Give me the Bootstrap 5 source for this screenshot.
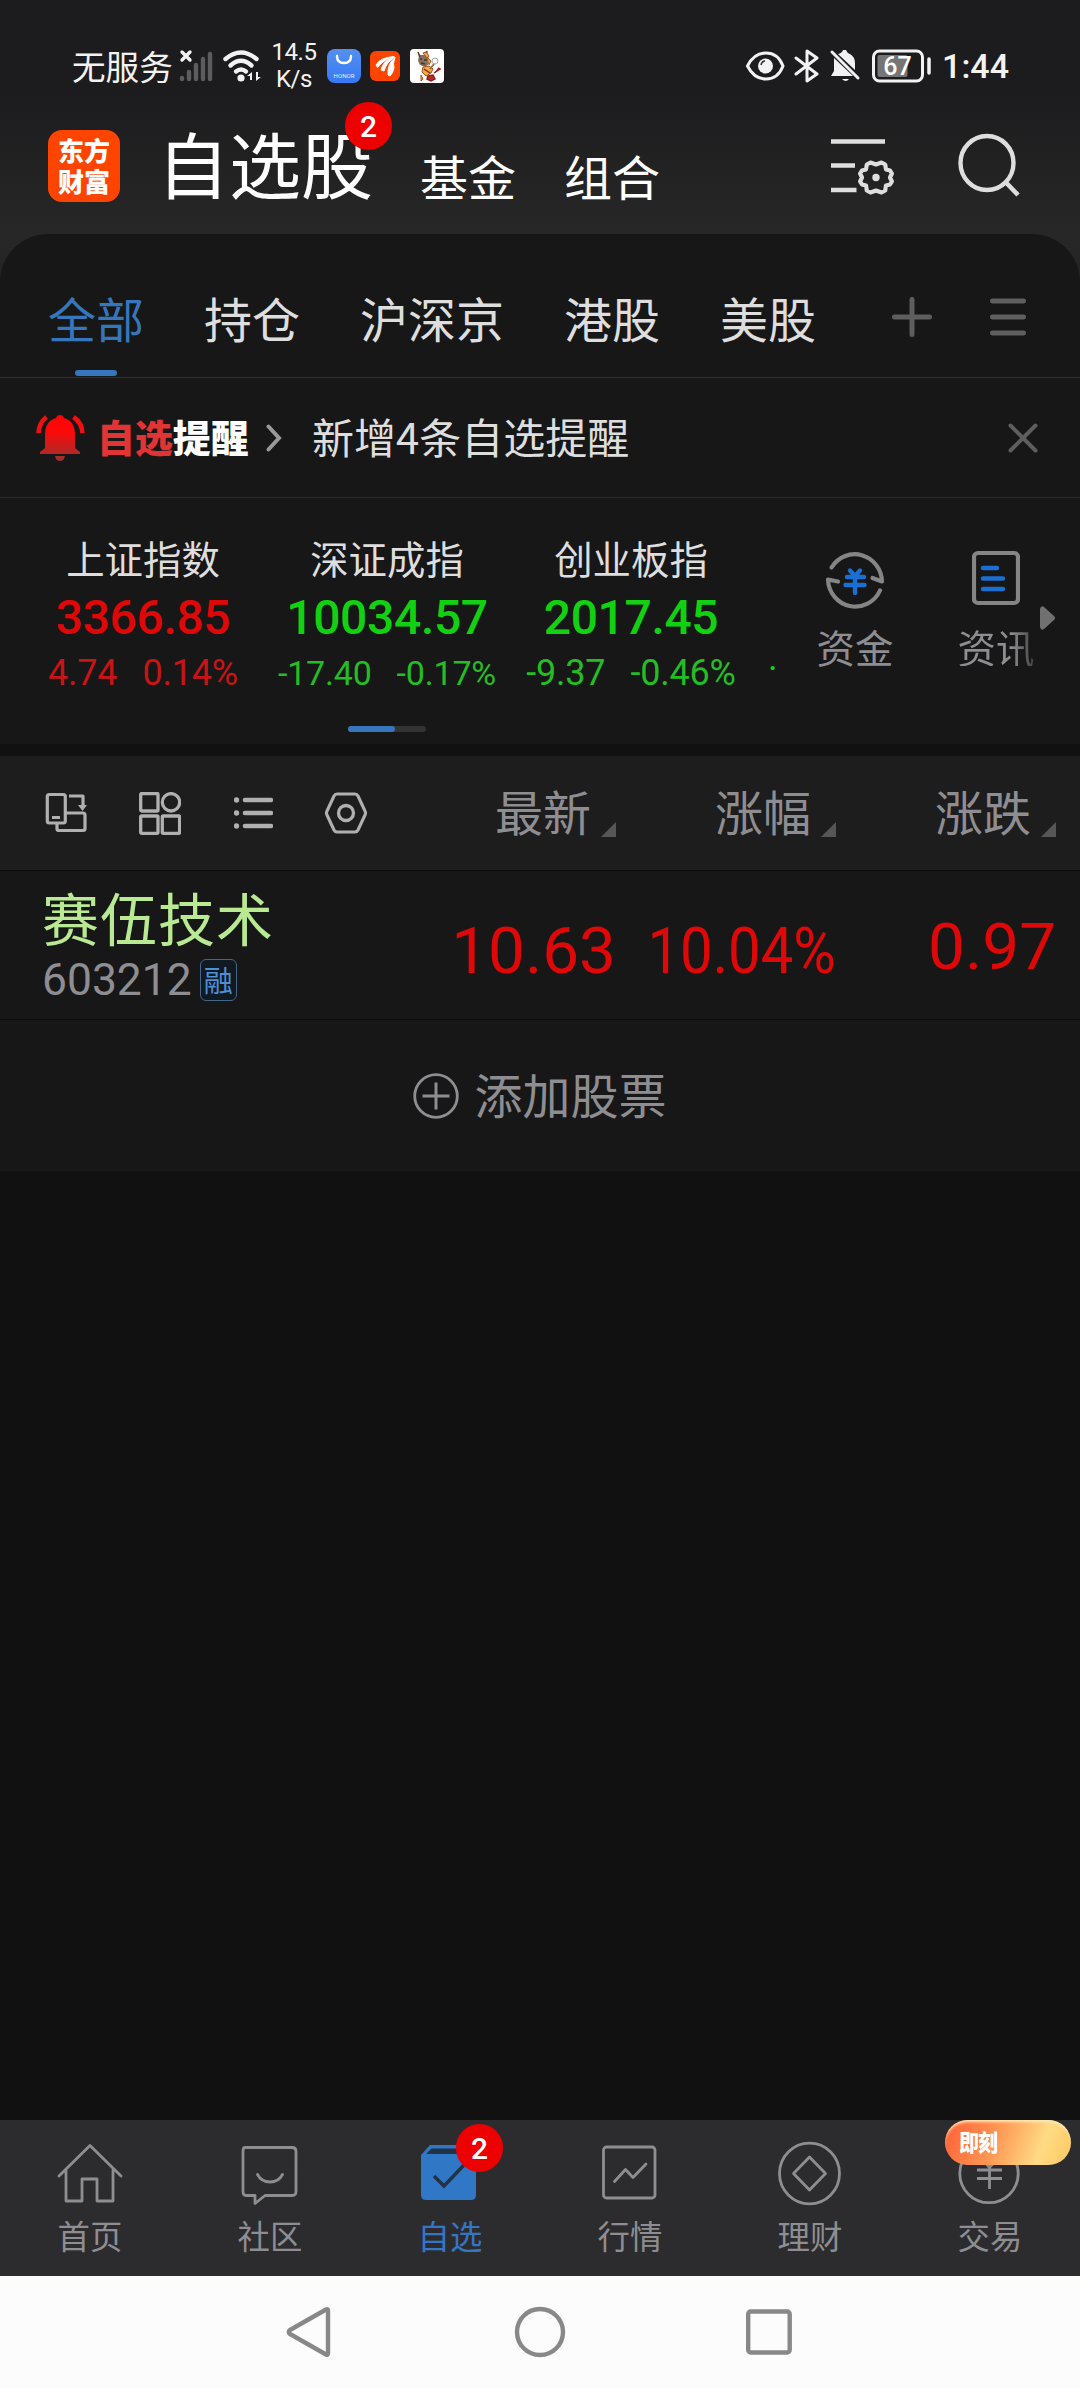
<!DOCTYPE html>
<html lang="zh-CN">
<head>
<meta charset="utf-8">
<meta name="viewport" content="width=device-width, initial-scale=1">
<title>自选股</title>
<link href="https://cdn.jsdelivr.net/npm/bootstrap@5.3.0/dist/css/bootstrap.min.css" rel="stylesheet">
<style>
body{width:1080px;height:2388px;background:#111;color:#dedede;font-family:"Noto Sans CJK SC",sans-serif;overflow:hidden}
svg{display:block;flex:none;fill:none}
.num{font-family:Roboto,sans-serif}
.t48{font-size:48px;line-height:48px}
.app-head{height:282px;background:linear-gradient(#1c1c1e 0,#1c1c1e 90px,#272727 234px,#242424 282px)}
.status{height:132px;padding:0 71px 0 72px;color:#f2f2f2}
.carrier{font-size:33.6px;line-height:34px;width:101px}
.speed{font-size:24px;line-height:27px;width:48px;margin:0 12px 0 7px;letter-spacing:-.4px}
.clock{font-size:34px;line-height:34px;font-weight:500;margin-left:9px}
.logo{width:72px;height:72px;border-radius:14px;background:#ff4400;color:#fff;font-weight:900;font-size:26px;line-height:31px;padding-top:4px;margin-top:-2px}
.head-row{height:102px;padding:0 59px 0 48px;color:#fff}
.main-title{font-size:72px;line-height:72px;margin:-6px 3px 0 37px}
.sub-title{margin-top:19px}
.dot{width:47px;height:48px;border-radius:24px;background:#ec0000;color:#fff;font-size:30px;line-height:49px;font-weight:500;text-align:center}
.title-dot{left:188px;top:-24px}
.panel{margin-top:-48px;background:#171717;border-radius:48px 48px 0 0}
.tabs{height:144px;padding:22px 54px 0 48px;border-bottom:1px solid #2e2e2e;gap:60px}
.tabs .act{color:#3576bd}
.tabs .act::after{content:"";position:absolute;left:27px;bottom:-35px;width:42px;height:6px;border-radius:3px;background:#3576bd}
.notice{height:120px;border-bottom:1px solid #2b2b2b;padding:0 42px 0 36px}
.notice-tag{font-size:37.9px;line-height:40px;font-weight:900;color:#fff;margin:-4px 0 0 12px;width:154px}
.notice-tag b{color:#e23434;font-weight:900}
.notice-msg{font-size:42px;line-height:42px;margin:-4px 0 0 30px}
.indices{height:246px;padding-left:21px}
.idx-list{width:754px;overflow:hidden}
.idx{width:244px;flex:none;padding-top:39px;text-align:center}
.idx h6{font-size:38.4px;line-height:40px;margin:0;font-weight:400;color:#dedede}
.idx .val{font-size:48px;line-height:56px;font-weight:500;margin-top:13px;letter-spacing:-.35px}
.idx .chg{font-size:36px;line-height:36px;margin-top:9px;gap:25px;white-space:nowrap;letter-spacing:-.2px}
.idx .chg.sm{font-size:34px}
.next-idx{padding:153px 0 0 15px;font-size:36px;line-height:36px}
.up{color:#de0808}.up .chg{color:#c81414}
.down{color:#12d012}.down .chg{color:#24bd24}
.pager{width:78px;height:6px;border-radius:3px;background:#333;margin:-18px 0 0 348px}
.pager i{display:block;width:47px;height:6px;border-radius:3px;background:#3576bd}
.quick{font-size:38.4px;line-height:40px;color:#8e8e92;width:78px}
.quick svg{margin-bottom:17px}
.fade-end{background:linear-gradient(90deg,#8e8e92 70%,#444 100%);-webkit-background-clip:text;background-clip:text;color:transparent}
.gapbar{height:12px;background:#111}
.thead{height:114px;background:#1d1d1d;color:#8e8e92;padding:0 24px 0 45px}
.col-h{gap:10px;width:220px;padding-bottom:6px}
.col-h svg{margin-bottom:-39px}
.stock{height:150px;background:#171717;border-top:1px solid #0b0b0b;border-bottom:1px solid #0b0b0b;padding:0 24px 0 42px}
.sname{font-size:57px;line-height:58px;color:#b9e993;letter-spacing:1px}
.scode{font-size:44.4px;line-height:42px;color:#8e8e92}
.rong{width:37px;height:42px;border:1px solid #456684;border-radius:6px;background:#111a23;color:#4f8fd6;font-size:29px;line-height:38px;text-align:center;margin-left:8px}
.q{font-size:65.6px;line-height:66px;width:220px;text-align:right;white-space:nowrap}
.q span{display:inline-block;transform-origin:right}
.q .narrow{transform:scaleX(.885)}
.add{height:151px;background:#171717;color:#8e8e92;gap:15px}
.add span{margin-top:-5px}
.tabbar{height:156px;background:#2c2c2e;color:#8e8e92;font-size:32.4px;line-height:34px}
.tabbar>div{width:180px;padding-top:18px}
.tabbar svg{margin-bottom:10px}
.tabbar .act{color:#3576c4}
.tab-dot{left:96px;top:4px}
.pill{left:45px;top:0;width:126px;height:45px;border-radius:23px;background:linear-gradient(110deg,#ff6a3c 8%,#ff9a55 42%,#ffdb85 75%,#ffc860);color:#fff;font-size:20px;line-height:44px;font-weight:900;padding-left:14px;letter-spacing:-1px;box-shadow:inset 0 3px 3px -1px #ffe9b8}
.pill span{display:inline-block;transform:scaleY(1.15)}
.sysnav{height:112px;background:#fcfcfc}
</style>
<script src="https://cdn.jsdelivr.net/npm/bootstrap@5.3.0/dist/js/bootstrap.bundle.min.js"></script>
</head>
<body class="d-flex flex-column">
<header class="app-head flex-shrink-0">
  <div class="status d-flex align-items-center">
    <span class="carrier text-nowrap">无服务</span>
    <svg width="46" height="34" viewBox="0 0 46 34" class="ms-1"><g stroke="#5c5c5f" stroke-width="4.4" stroke-linecap="round"><path d="M5 29v1M12 23v7M19 16v14M26 10v20M33 5v25"/></g><path d="M5 3l8 8M13 3l-8 8" stroke="#f2f2f2" stroke-width="3.4" stroke-linecap="round"/></svg>
    <svg width="40" height="34" viewBox="0 0 40 34"><g stroke="#f2f2f2" stroke-width="4.4" stroke-linecap="round"><path d="M2.500 10Q18 -3 33.500 10"/><path d="M7.500 16.500Q18 7 28.500 16.500"/><path d="M13 22.500Q18 18.500 23 22.500"/></g><circle cx="18" cy="29" r="3.600" fill="#f2f2f2"/><path d="M24 27l5-4v8h-2v-4zM38 28l-5 4v-9h2v5z" fill="#f2f2f2"/></svg>
    <div class="speed num text-center">14.5<br>K/s</div>
    <svg width="34" height="34" viewBox="0 0 34 34" style="margin-left:-3px"><defs><linearGradient id="hb" x2="0" y2="1"><stop stop-color="#5590f0"/><stop offset="1" stop-color="#3579f5"/></linearGradient></defs><rect width="34" height="34" rx="8" fill="url(#hb)"/><path d="M10 7q0 7 7 7t7-7" stroke="#fff" stroke-width="2.400" stroke-linecap="round"/><text x="17" y="28.500" font-family="Roboto" font-size="6" fill="#e8f0ff" text-anchor="middle" textLength="21">HONOR</text></svg>
    <svg width="30" height="30" viewBox="0 0 30 30" style="margin-left:9px"><rect width="30" height="30" rx="6" fill="#ff4400"/><path d="M6 14Q10 6.500 24 5.500 13 9 7.500 16.500zM11 19Q13 9 24.500 6 16 12 14 20zM18 24Q17 13 25 6.500 22.500 13 24 17 23 22 20 25z" fill="#fff" stroke="#fff" stroke-linejoin="round"/></svg>
    <svg width="34" height="34" viewBox="0 0 34 34" style="margin-left:10px"><rect width="34" height="34" rx="4" fill="#fff"/><path d="M9 6h7l3 3v6l-4 3-5-2-2-4z" fill="#87715d"/><path d="M8 3l2 5M17 2l-1 5M10 10h2M14 11h3M11 14l4 1" stroke="#4c3529" stroke-width="1.500"/><path d="M13 4l3-1 3 4-2 2zM18 9l3 3-2 4M13 18l6-1 4 3-2 4-5 3-4-4zM11 26l2 4-2 2z" fill="#efae38" stroke="#a5501f"/><path d="M18 27l5-1 2 4-4 2-4-2zM14 20l6 4M24 24l6-4-2-1" stroke="#8c2020" stroke-width="1.500" fill="#b92a1e"/><circle cx="25" cy="12" r="3" stroke="#aaa"/><path d="M24 15l-4 5" stroke="#996f49" stroke-width="2"/></svg>
    <div class="ms-auto d-flex align-items-center">
      <svg width="127" height="34" viewBox="0 0 127 34"><path d="M2.500 17Q9 4 21 4t17 13Q33 30 21 30T2.500 17z" stroke="#f2f2f2" stroke-width="3"/><circle cx="20.500" cy="17" r="7.500" fill="#f2f2f2"/><path d="M16 16q1-4 4-4" stroke="#333" stroke-width="1.500"/><path d="M51 9l21 16-10 7V2l10 7-21 16" stroke="#f2f2f2" stroke-width="3" stroke-linecap="round" stroke-linejoin="round"/><path d="M89 9l19 18H86l3-5zM93 5q4-1 5-4h3q1 3 4 4 5 3 5 9v7zM97 30h7q-3 4-7 0z" fill="#f2f2f2"/><path d="M87 3l26 26" stroke="#f2f2f2" stroke-width="3" stroke-linecap="round"/></svg>
      <svg width="61" height="34" viewBox="0 0 61 34"><rect x="1.500" y="2" width="49" height="30" rx="6" stroke="#f2f2f2" stroke-width="3"/><rect x="5.500" y="6" width="30" height="22" rx="2" fill="#757575"/><path d="M57 10v14" stroke="#f2f2f2" stroke-width="3.500" stroke-linecap="round"/><text x="25.500" y="25.500" font-family="Roboto" font-size="25" font-weight="500" fill="#fff" text-anchor="middle">67</text></svg>
      <span class="num clock">1:44</span>
    </div>
  </div>
  <div class="head-row d-flex align-items-start">
    <div class="logo text-center">东方<br>财富</div>
    <div class="main-title position-relative text-nowrap">自选股<span class="dot num position-absolute title-dot">2</span></div>
    <div class="t48 sub-title" style="margin-left:44px">基金</div>
    <div class="t48 sub-title" style="margin-left:48px">组合</div>
    <svg class="ms-auto" width="64" height="62" viewBox="0 0 64 62" style="margin-top:4px"><path d="M0 5.500h54M0 29.500h24M0 54h25.500" stroke="#dedede" stroke-width="4.600"/><path d="M59 41.500L60.900 45.500 59 48.500 55 49.500 54.200 54.500 50.500 56.500 45 54.500 39.500 56.500 35.800 54.500 35 49.500 31 48.500 29.100 45.500 31 41.500 29.100 37.500 31 34.500 35 33.500 35.800 28.500 39.500 26.500 45 28.500 50.500 26.500 54.200 28.500 55 33.500 59 34.500 60.900 37.500z" stroke="#dedede" stroke-width="4.200" stroke-linejoin="round"/><circle cx="45" cy="41.500" r="3.700" fill="#dedede"/></svg>
    <svg width="64" height="66" viewBox="0 0 64 66" style="margin:1px 0 0 62px"><ellipse cx="30" cy="30" rx="26.500" ry="27" stroke="#dedede" stroke-width="4.400"/><path d="M48 48.500L61 62" stroke="#dedede" stroke-width="4.600"/></svg>
  </div>
</header>
<main class="flex-grow-1">
  <section class="panel position-relative">
    <nav class="tabs t48 d-flex align-items-center">
      <span class="act position-relative">全部</span><span>持仓</span><span>沪深京</span><span>港股</span><span>美股</span>
      <div class="ms-auto d-flex align-items-center">
        <svg width="40" height="40" viewBox="0 0 40 40"><path d="M20 2.500v35M2.500 20h35" stroke="#5e5e5e" stroke-width="5" stroke-linecap="round"/></svg>
        <svg width="36" height="38" viewBox="0 0 36 38" style="margin-left:58px"><path d="M2.500 3h31M2.500 19h31M2.500 35h31" stroke="#5e5e5e" stroke-width="5" stroke-linecap="round"/></svg>
      </div>
    </nav>
    <div class="notice d-flex align-items-center">
      <svg width="49" height="46" viewBox="0 0 49 46"><defs><linearGradient id="rb" x2="0" y2="46" gradientUnits="userSpaceOnUse"><stop stop-color="#ff0505"/><stop offset=".35" stop-color="#ff0808"/><stop offset="1" stop-color="#983232"/></linearGradient></defs><path d="M24 0q3 0 4 3 11 3 11 17v13l5 4v2H4v-2l5-4V20Q9 6 20 3q1-3 4-3zM19 41h10q-1 5-5 5t-5-5z" fill="url(#rb)"/><path d="M10.500 2Q3 8 2.500 18M37.500 2Q46 8 46.500 18" stroke="#f01010" stroke-width="4.600"/></svg>
      <div class="notice-tag text-nowrap"><b>自选</b>提醒</div>
      <svg width="16" height="28" viewBox="0 0 16 28" style="margin-left:15px"><path d="M2.500 2.500L13 14 2.500 25.500" stroke="#999" stroke-width="4" stroke-linecap="round"/></svg>
      <span class="notice-msg">新增4条自选提醒</span>
      <svg class="ms-auto" width="30" height="30" viewBox="0 0 30 30"><path d="M2.500 2.500l25 25M27.500 2.500l-25 25" stroke="#5e5e5e" stroke-width="4" stroke-linecap="round"/></svg>
    </div>
    <div class="indices d-flex">
      <div class="idx-list d-flex">
        <div class="idx up"><h6>上证指数</h6><div class="val num">3366.85</div><div class="chg num d-flex justify-content-center"><span>4.74</span><span>0.14%</span></div></div>
        <div class="idx down"><h6>深证成指</h6><div class="val num">10034.57</div><div class="chg sm num d-flex justify-content-center"><span>-17.40</span><span>-0.17%</span></div></div>
        <div class="idx down"><h6>创业板指</h6><div class="val num">2017.45</div><div class="chg num d-flex justify-content-center"><span>-9.37</span><span>-0.46%</span></div></div>
        <div class="down next-idx num">·</div>
      </div>
      <div class="quick d-flex flex-column align-items-center" style="margin:49px 0 0 41px">
        <svg width="60" height="62" viewBox="0 0 60 62"><g stroke="#858585" stroke-width="4.200" stroke-linecap="round" stroke-linejoin="round"><path d="M6.500 20.500A27.300 28 0 0 1 57 34.500L47.500 31"/><path d="M55 44.500A27.300 28 0 0 1 3 33.500L13 35.500" transform="translate(0 -1)"/></g><path d="M25 23.500l5 5.500 5-5.500M22 30h17M20.500 38h19M30 29v17" stroke="#1a70d2" stroke-width="4.400" stroke-linecap="round"/></svg>资金</div>
      <div class="quick d-flex flex-column align-items-center" style="margin:49px 0 0 63px">
        <svg width="48" height="62" viewBox="0 0 48 62"><rect x="2" y="6" width="44" height="50" rx="4" stroke="#858585" stroke-width="4.200"/><path d="M11 21h14M11 31.500h20M11 42h20" stroke="#1a70d2" stroke-width="4.400" stroke-linecap="round"/></svg><span class="fade-end">资讯</span></div>
      <svg width="15" height="24" viewBox="0 0 15 24" style="margin:108px 0 0 5px"><path d="M0 3Q1-1 4 1l10 9q2 2 0 4L4 23q-3 2-4-2z" fill="#707070"/></svg>
    </div>
    <div class="pager"><i></i></div>
    <div style="height:12px"></div>
  </section>
  <div class="gapbar"></div>
  <section class="thead d-flex align-items-center">
    <svg width="42" height="42" viewBox="0 0 42 42"><g stroke="#b0b0b0" stroke-width="3.200" stroke-linejoin="round"><rect x="2.300" y="2.500" width="18" height="28.500" rx="2"/><path d="M7 25.500h8M24 4h14v10M12 32v5q0 1.500 2 1.500h24q2 0 2-2V23q0-2-2-2H21"/></g><path d="M33 13h9l-4.500 6z" fill="#b0b0b0"/></svg>
    <svg width="42" height="43" viewBox="0 0 42 43" style="margin-left:52px"><g stroke="#b0b0b0" stroke-width="3.300"><rect x="1.700" y="1.500" width="17.300" height="17.500" rx="1"/><circle cx="32" cy="10.300" r="8.700"/><rect x="1.700" y="24" width="17.300" height="17.300" rx="1"/><rect x="23.300" y="24" width="17.300" height="17.300" rx="1"/></g></svg>
    <svg width="39" height="34" viewBox="0 0 39 34" style="margin-left:53px"><path d="M11 4h26M11 17h26M11 30h26" stroke="#b0b0b0" stroke-width="4.600" stroke-linecap="round"/><g fill="#b0b0b0"><circle cx="2.500" cy="4" r="2.700"/><circle cx="2.500" cy="17" r="2.700"/><circle cx="2.500" cy="30" r="2.700"/></g></svg>
    <svg width="42" height="42" viewBox="0 0 42 42" style="margin-left:52px"><path d="M12 2h18q2 0 3 2l7 15q1 2 0 4L33 38q-1 2-3 2H12q-2 0-3-2L2 23q-1-2 0-4L9 4q1-2 3-2z" stroke="#b0b0b0" stroke-width="3.100"/><circle cx="21" cy="21" r="7.500" stroke="#b0b0b0" stroke-width="3.300"/></svg>
    <div class="ms-auto d-flex">
      <div class="col-h t48 d-flex align-items-center justify-content-end">最新<svg width="15" height="15"><path d="M15 0v15H0z" fill="#565659"/></svg></div>
      <div class="col-h t48 d-flex align-items-center justify-content-end">涨幅<svg width="15" height="15"><path d="M15 0v15H0z" fill="#565659"/></svg></div>
      <div class="col-h t48 d-flex align-items-center justify-content-end">涨跌<svg width="15" height="15"><path d="M15 0v15H0z" fill="#565659"/></svg></div>
    </div>
  </section>
  <section class="stock d-flex">
    <div style="padding-top:16px">
      <div class="sname">赛伍技术</div>
      <div class="d-flex" style="margin-top:14px"><span class="scode num">603212</span><span class="rong">融</span></div>
    </div>
    <div class="ms-auto up num d-flex" style="padding-top:47px">
      <div class="q">10.63</div><div class="q"><span class="narrow">10.04%</span></div><div class="q" style="margin-top:-4px">0.97</div>
    </div>
  </section>
  <section class="add t48 d-flex align-items-center justify-content-center">
    <svg width="46" height="46" viewBox="0 0 46 46"><circle cx="23" cy="23" r="21.300" stroke="#8e8e92" stroke-width="2.800"/><path d="M23 9.500v27M9.500 23h27" stroke="#8e8e92" stroke-width="3"/></svg><span>添加股票</span>
  </section>
</main>
<footer class="flex-shrink-0">
  <nav class="tabbar d-flex">
    <div class="d-flex flex-column align-items-center"><svg width="70" height="70" viewBox="0 0 70 70" stroke="#8e8e92" stroke-width="2.800" stroke-linejoin="round" stroke-linecap="round"><path d="M4 38L35 7.500 66 38M11 32v31h16V41h15v22h16V32"/></svg>首页</div>
    <div class="d-flex flex-column align-items-center"><svg width="70" height="70" viewBox="0 0 70 70" stroke="#8e8e92" stroke-width="2.800" stroke-linejoin="round" stroke-linecap="round"><path d="M10 9.500h47q4 0 4 4v40q0 4-4 4H30l-10 8v-8H11q-3 0-3-4v-40q0-4 2-4zM22.500 36.500q4 7.500 12.500 7.500t12.500-7.500"/></svg>社区</div>
    <div class="d-flex flex-column align-items-center position-relative act"><svg width="70" height="70" viewBox="0 0 70 70"><path d="M6 17l9-10h41l5 10v40q0 5-5 5H11q-5 0-5-5V18z" fill="#3077c5"/><path d="M11 16l5.500-5.500h36l4 5.500z" fill="#223247"/><path d="M19 38l10 10 20-21" stroke="#223247" stroke-width="3.400"/></svg>自选<span class="dot num position-absolute tab-dot">2</span></div>
    <div class="d-flex flex-column align-items-center"><svg width="70" height="70" viewBox="0 0 70 70" stroke="#8e8e92" stroke-width="2.800" stroke-linejoin="round" stroke-linecap="round"><rect x="8.500" y="9" width="51.500" height="51" rx="3"/><path d="M19.500 43.500l11-12 7.500 8L51 26"/></svg>行情</div>
    <div class="d-flex flex-column align-items-center"><svg width="70" height="70" viewBox="0 0 70 70" stroke="#8e8e92" stroke-width="2.800" stroke-linejoin="round"><ellipse cx="34.500" cy="35.500" rx="30" ry="30.300"/><path d="M34.500 19l16 16.500-16 16.500-16-16.500z"/></svg>理财</div>
    <div class="d-flex flex-column align-items-center position-relative"><svg width="70" height="70" viewBox="0 0 70 70" stroke="#8e8e92" stroke-width="2.800"><circle cx="34" cy="35.500" r="29.200"/><path d="M25 19l9.500 10.500L44 19M22 32h25M22 40.500h25M34.500 29v22"/></svg>交易<span class="pill position-absolute text-nowrap"><span>即刻</span></span></div>
  </nav>
  <div class="sysnav d-flex align-items-center">
    <svg width="46" height="52" viewBox="0 0 46 52" style="margin-left:286px"><path d="M40 3.500Q42 2.500 42 5v42q0 2.500-2 1.500L4 28q-2.500-2 0-4z" stroke="#888" stroke-width="4.400" stroke-linejoin="round"/></svg>
    <svg width="52" height="52" viewBox="0 0 52 52" style="margin-left:182px"><circle cx="26" cy="26" r="23" stroke="#888" stroke-width="4.400"/></svg>
    <svg width="46" height="46" viewBox="0 0 46 46" style="margin-left:180px"><rect x="2.200" y="2.500" width="41.500" height="41" rx="2.500" stroke="#888" stroke-width="4.400"/></svg>
  </div>
</footer>
</body>
</html>
